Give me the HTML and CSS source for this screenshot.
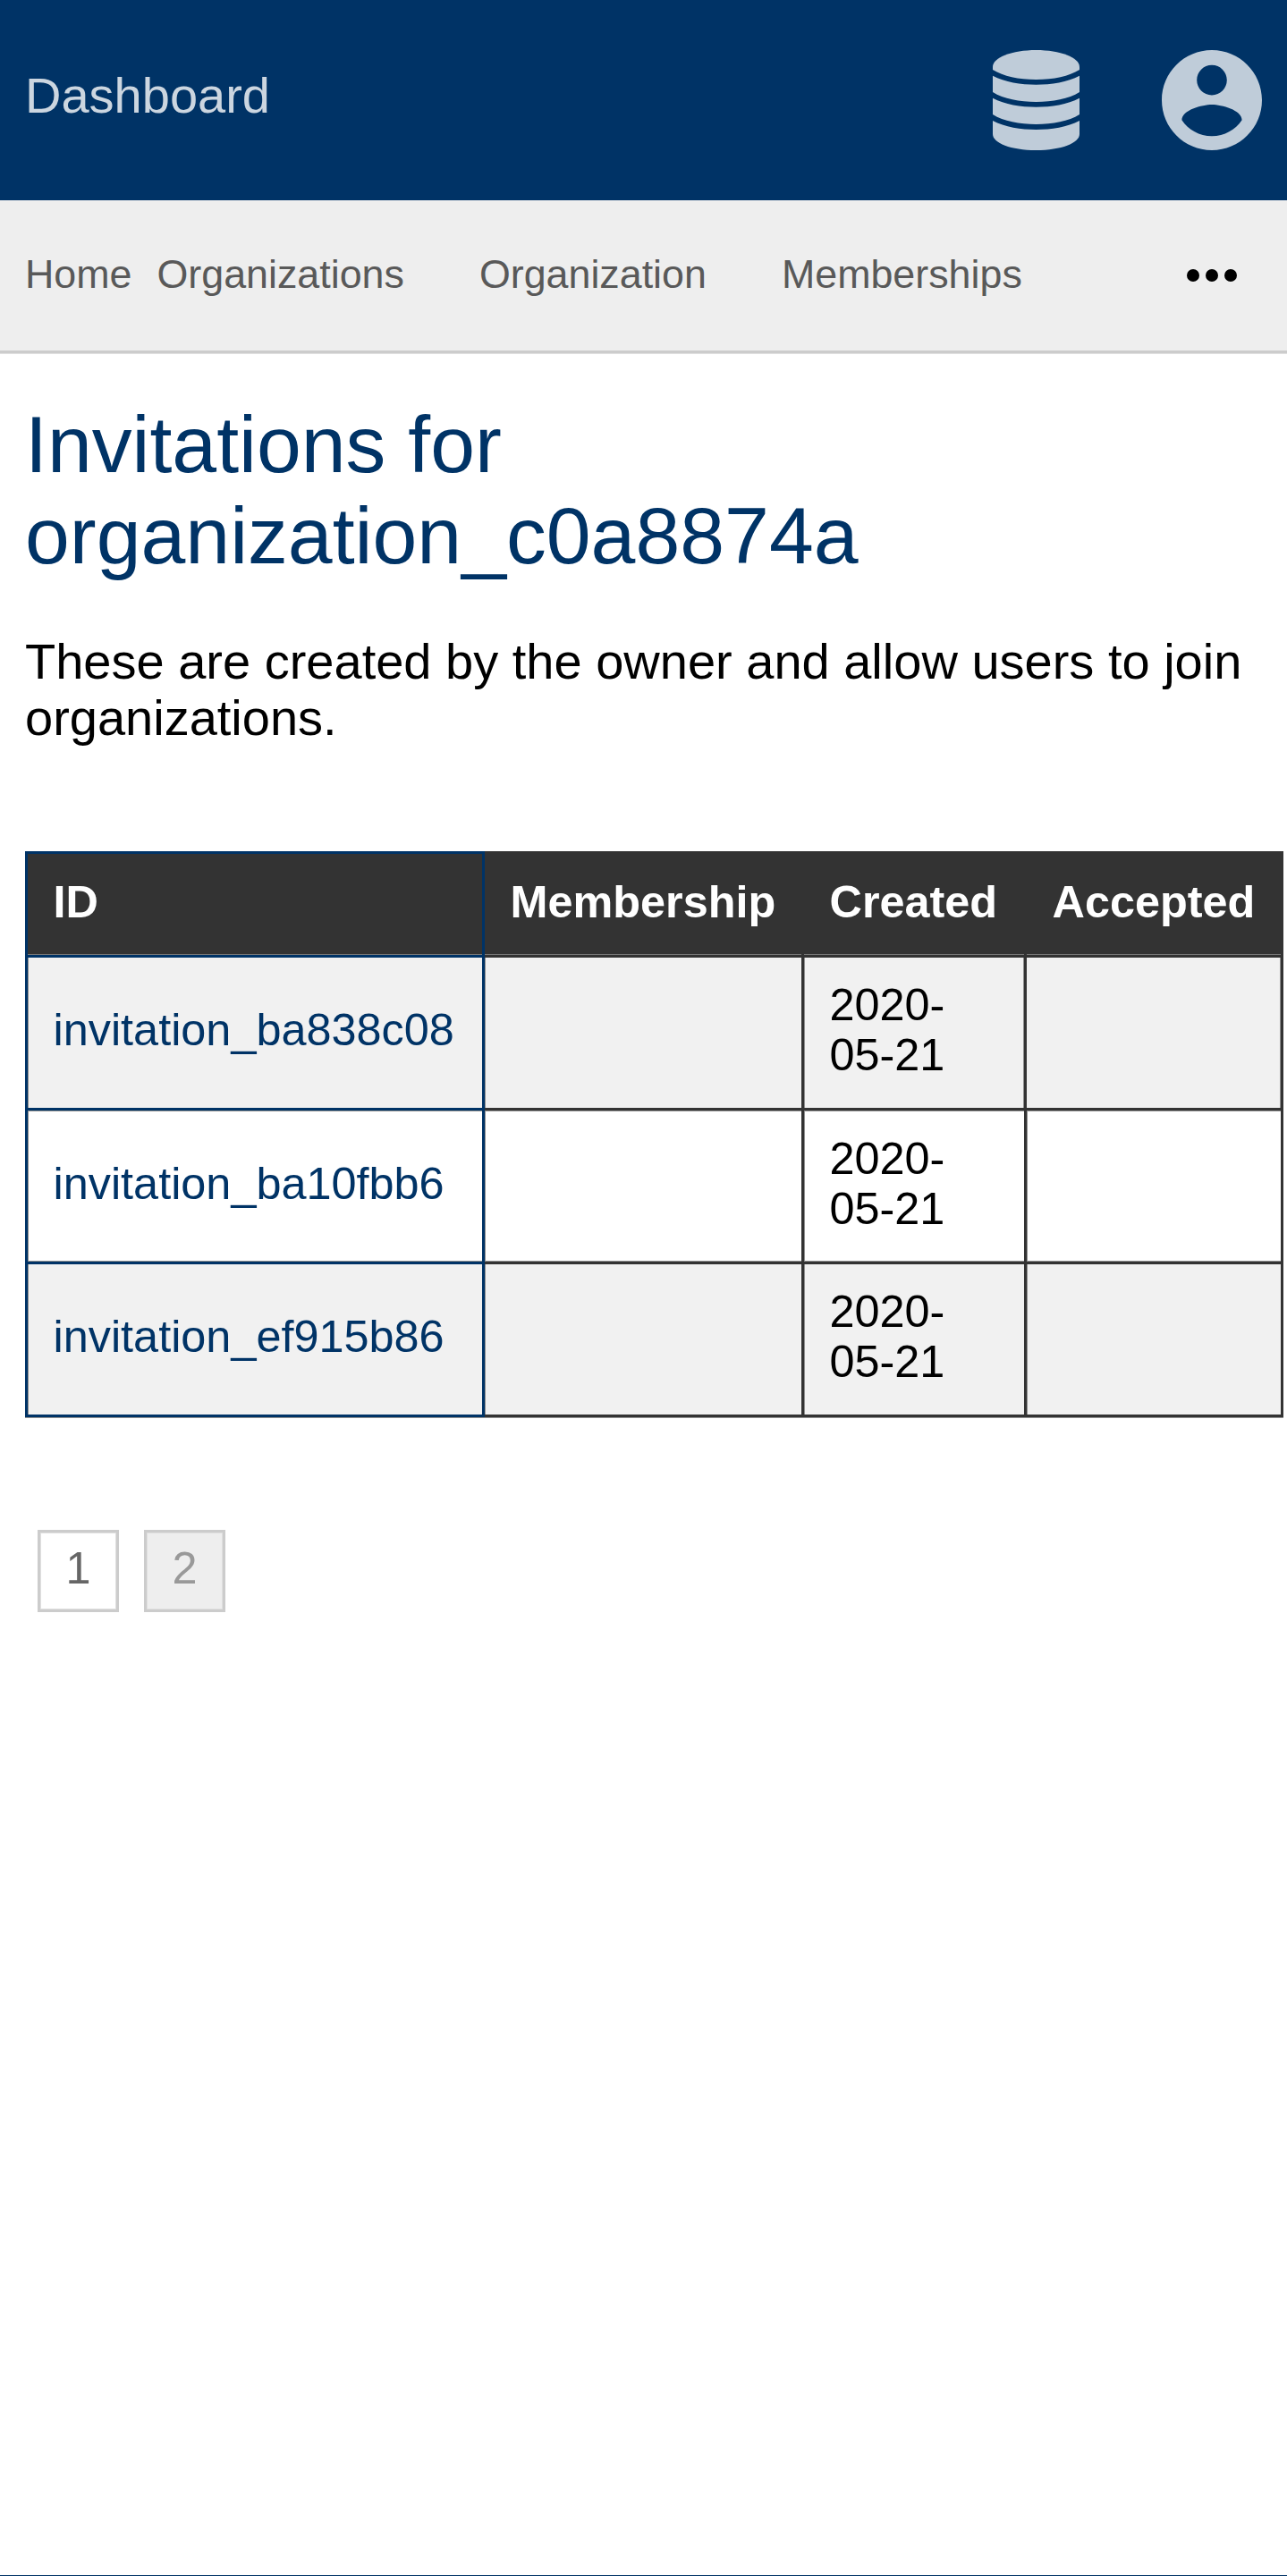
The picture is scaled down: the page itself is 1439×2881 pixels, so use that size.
FILE: index.html
```html
<!DOCTYPE html>
<html lang="en">
<head>
<meta charset="utf-8">
<title>Invitations</title>
<link rel="stylesheet" href="styles.css">
</head>
<body>
<header class="header">
  <a class="header-title">Dashboard</a>
  <div class="header-icons">
    <svg class="icon-database" viewBox="90 168 291 336" preserveAspectRatio="none">
      <path d="M90 224C90 193 155 168 235.500 168S381 193 381 224V234C345 256 295 267 235.500 267S126 256 90 234Z"/>
      <path d="M90 254C130 275 185 284 235.500 284S341 275 381 254V309C345 332 290 342 235.500 342S126 332 90 309Z"/>
      <path d="M90 329C130 350 185 359 235.500 359S341 350 381 329V384C345 407 290 417 235.500 417S126 407 90 384Z"/>
      <path d="M90 405C130 426 185 435 235.500 435S341 426 381 405V450C381 480 320 504 235.500 504S90 480 90 450Z"/>
    </svg>
    <svg class="icon-account" viewBox="2 2 20 20">
      <path d="M12 2C6.480 2 2 6.480 2 12s4.480 10 10 10 10-4.480 10-10S17.520 2 12 2zm0 3c1.660 0 3 1.340 3 3s-1.340 3-3 3-3-1.340-3-3 1.340-3 3-3zm0 14.200c-2.500 0-4.710-1.280-6-3.220.030-1.990 4-3.080 6-3.080 1.990 0 5.970 1.090 6 3.080-1.290 1.940-3.500 3.220-6 3.220z"/>
    </svg>
  </div>
</header>
<nav class="nav">
  <a class="nav-home">Home</a>
  <div class="nav-links"><a>Organizations</a><a>Organization</a><a>Memberships</a></div>
  <svg class="nav-more" viewBox="0 0 56 14">
    <circle cx="7" cy="7" r="7"/><circle cx="28" cy="7" r="7"/><circle cx="49" cy="7" r="7"/>
  </svg>
</nav>
<main class="content">
  <h1 class="title">Invitations for<br>organization_c0a8874a</h1>
  <p class="intro">These are created by the owner and allow users to join organizations.</p>
  <table class="table">
    <colgroup><col class="col-id"><col class="col-membership"><col class="col-created"><col class="col-accepted"></colgroup>
    <thead>
      <tr><th>ID</th><th>Membership</th><th>Created</th><th>Accepted</th></tr>
    </thead>
    <tbody>
      <tr class="row"><td><a>invitation_ba838c08</a></td><td></td><td>2020-<br>05-21</td><td></td></tr>
      <tr class="row"><td><a>invitation_ba10fbb6</a></td><td></td><td>2020-<br>05-21</td><td></td></tr>
      <tr class="row"><td><a>invitation_ef915b86</a></td><td></td><td>2020-<br>05-21</td><td></td></tr>
    </tbody>
  </table>
  <div class="pages"><a class="page">1</a><a class="page page-current">2</a></div>
</main>
<footer class="footer"></footer>
</body>
</html>
```
FILE: styles.css
```css
* { box-sizing: border-box; }

body {
  margin: 0;
  height: 2881px;
  display: flex;
  flex-direction: column;
  overflow: hidden;
  background: #fff;
  color: #000;
  font-family: "Liberation Sans", Arial, sans-serif;
  font-size: 56px;
}

.header {
  flex: none;
  height: 224px;
  padding: 0 28px;
  display: flex;
  align-items: center;
  justify-content: space-between;
  background: #003366;
}
.header-title { color: #ccd6e0; line-height: 63px; padding-bottom: 12px; }
.header-icons { display: flex; gap: 92px; fill: #bfccd9; }
.icon-database { width: 97px; height: 112px; }
.icon-account { width: 112px; height: 112px; }

.nav {
  flex: none;
  height: 171px;
  padding: 0 56px 0 28px;
  display: flex;
  align-items: center;
  gap: 28px;
  background: #eee;
  border-bottom: 3px solid #ccc;
  box-shadow: 0 1px #e0e0e0;
  color: #595959;
  font-size: 44.8px;
  line-height: 52px;
}
.nav-home, .nav-links { padding-bottom: 4px; }
.nav-links { display: flex; gap: 84px; }
.nav-more { width: 56px; height: 14px; margin-left: auto; }

.content { flex: 1; padding: 52px 0 0 28px; }
.title {
  margin: 0 0 58px;
  color: #003366;
  font-size: 89.6px;
  font-weight: 400;
  line-height: 101.5px;
}
.intro { margin: 0 0 118px; padding-right: 28px; line-height: 63px; }

.table {
  width: 1407px;
  table-layout: fixed;
  border-collapse: separate;
  border-spacing: 0;
  font-size: 50.4px;
  line-height: 56px;
  text-align: left;
}
.col-id { width: 514px; }
.col-membership { width: 357px; }
.col-created { width: 249px; }
.col-accepted { width: 287px; }
.table th, .table td {
  padding: 0 0 7px 28.5px;
  border: 0 solid #333;
  border-width: 0 3px 3px 0;
  vertical-align: middle;
}
.table th:first-child, .table td:first-child {
  border-color: #003366;
  border-left-width: 3px;
}
.table th {
  height: 119px;
  padding-bottom: 6px;
  border-top-width: 3px;
  background: #333;
  color: #fff;
  font-weight: 700;
  box-shadow: inset 0 -1px #777;
}
.table td { height: 171px; box-shadow: inset 1px 0 #8f8f8f; }
.table td:last-child { box-shadow: inset -1px 0 #8f8f8f; }
.table td:nth-child(3) { box-shadow: inset 1px 0 #8f8f8f, inset -1px 0 #8f8f8f; }
.table a { color: #003366; }
.row:nth-child(odd) td { background: #f1f1f1; }
.table .row:nth-child(2) td {
  height: 172px;
  padding-bottom: 6px;
  box-shadow: inset 0 1px #8f8f8f, inset 0 -1px #8f8f8f, inset 1px 0 #8f8f8f;
}
.table .row:last-child td { box-shadow: inset 1px 0 #8f8f8f, 0 1px #8f8f8f; }

.pages { display: flex; gap: 28px; margin: 126px 0 0 14px; }
.page {
  width: 91px;
  height: 92px;
  padding-bottom: 7px;
  display: flex;
  align-items: center;
  justify-content: center;
  border: 3px solid #ccc;
  box-shadow: inset 0 0 0 1px #e0e0e0;
  color: #666;
  font-size: 50.4px;
  line-height: 56px;
}
.page-current { background: #eee; color: #999; }

.footer { flex: none; height: 1px; background: #003366; }
```
